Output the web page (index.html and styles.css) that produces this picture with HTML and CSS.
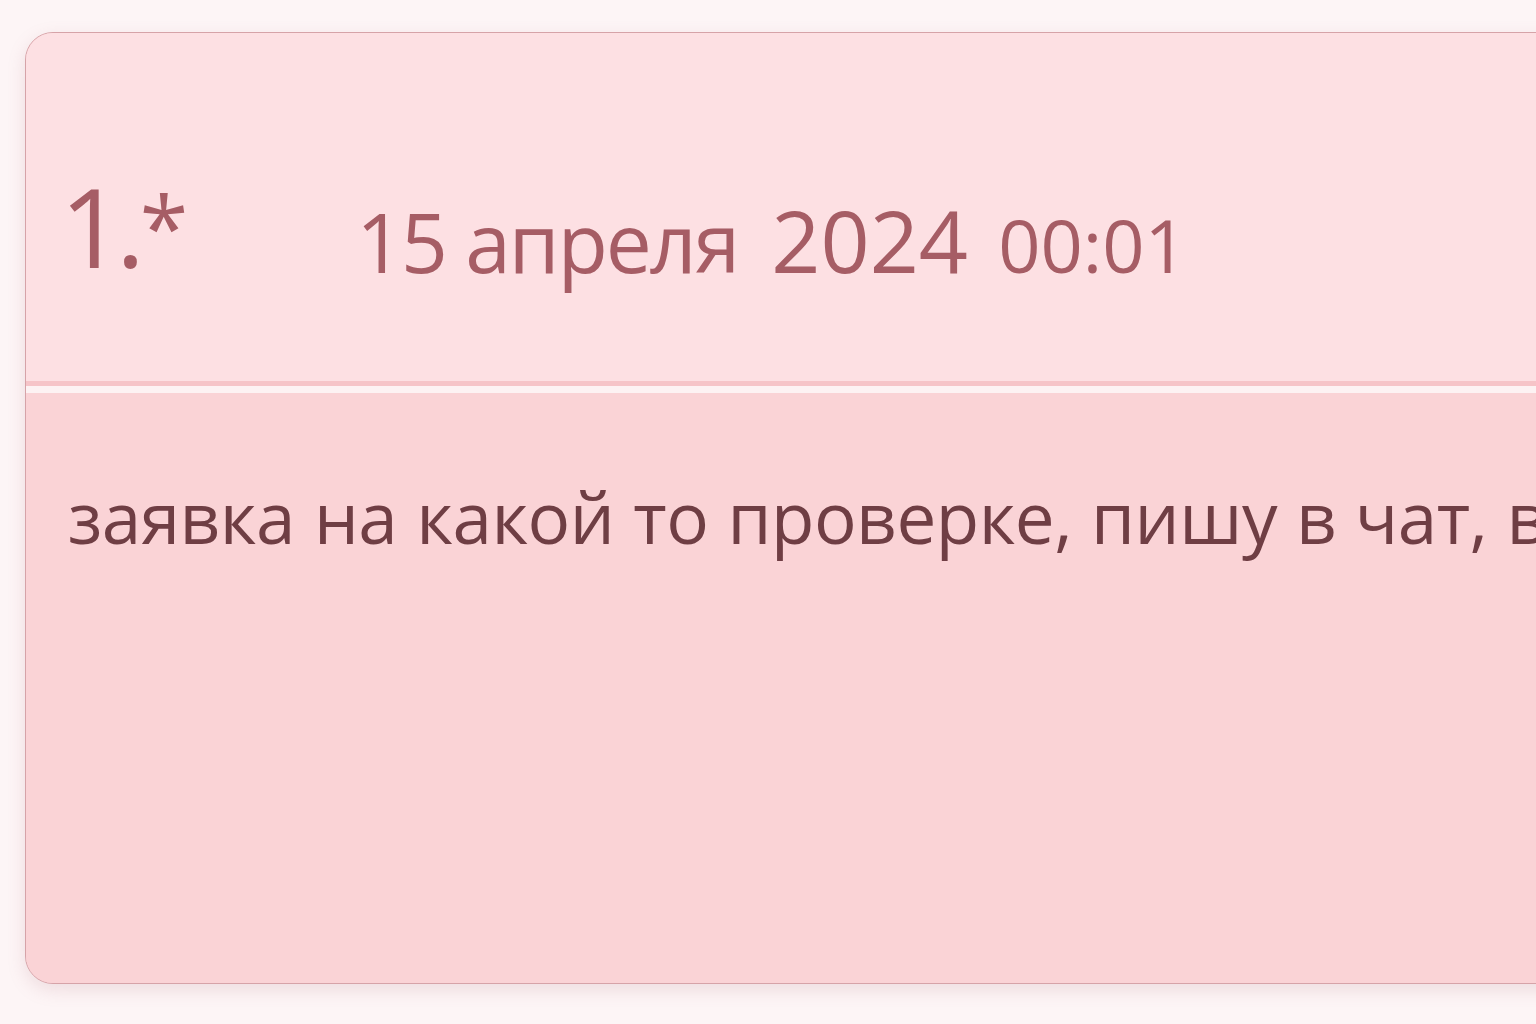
FILE: index.html
```html
<!DOCTYPE html>
<html lang="ru">
<head>
<meta charset="utf-8">
<link rel="stylesheet" href="styles.css">
</head>
<body>
<main class="page">
  <article class="card">
    <header class="card-head">
      <span class="num">1.<span class="star">*</span></span>
      <span class="date">15 апреля</span>
      <span class="year">2024</span>
      <span class="time">00:01</span>
    </header>
    <div class="divider"></div>
    <section class="card-body">
      <p class="msg">заявка на какой то проверке, пишу в чат, в чате не отвечают</p>
    </section>
  </article>
</main>
</body>
</html>
```
FILE: styles.css
```css
html, body {
  margin: 0;
  padding: 0;
  background: #fdf5f6;
  overflow: hidden;
  width: 1536px;
  height: 1024px;
}
.page {
  padding: 32px 0 0 25px;
  font-family: "Open Sans", "Noto Sans", sans-serif;
}
.card {
  width: 1640px;
  height: 952px;
  box-sizing: border-box;
  border: 1px solid #d6a3a8;
  border-radius: 28px;
  overflow: hidden;
  display: flex;
  flex-direction: column;
  background: #fad3d6;
  box-shadow: 0 6px 18px rgba(170, 110, 120, 0.18);
}
.card-head {
  height: 348px;
  background: #fde0e3;
  padding: 0 0 0 34px;
  box-sizing: border-box;
  color: #a65d65;
  white-space: nowrap;
  line-height: 1;
}
.num {
  display: inline-block;
  font-size: 110px;
  letter-spacing: -7px;
  width: 292px;
  vertical-align: 5px;
  margin-top: 137px;
}
.star {
  font-size: 88px;
  letter-spacing: 0;
  margin-left: 2px;
  vertical-align: 8px;
}
.date {
  font-size: 82px;
  letter-spacing: -2px;
  margin-right: 29px;
}
.year {
  font-size: 86px;
  margin-right: 26px;
}
.time {
  font-size: 74px;
}
.divider {
  height: 5px;
  background: #f6c4c8;
  border-bottom: 7px solid #fdf2f3;
}
.card-body {
  flex: 1;
  background: #fad3d6;
  padding: 0 0 0 42px;
}
.msg {
  margin: 0;
  padding-top: 88px;
  font-size: 71px;
  word-spacing: 1px;
  letter-spacing: -0.5px;
  line-height: 1;
  color: #6f3e44;
  white-space: nowrap;
}
```
